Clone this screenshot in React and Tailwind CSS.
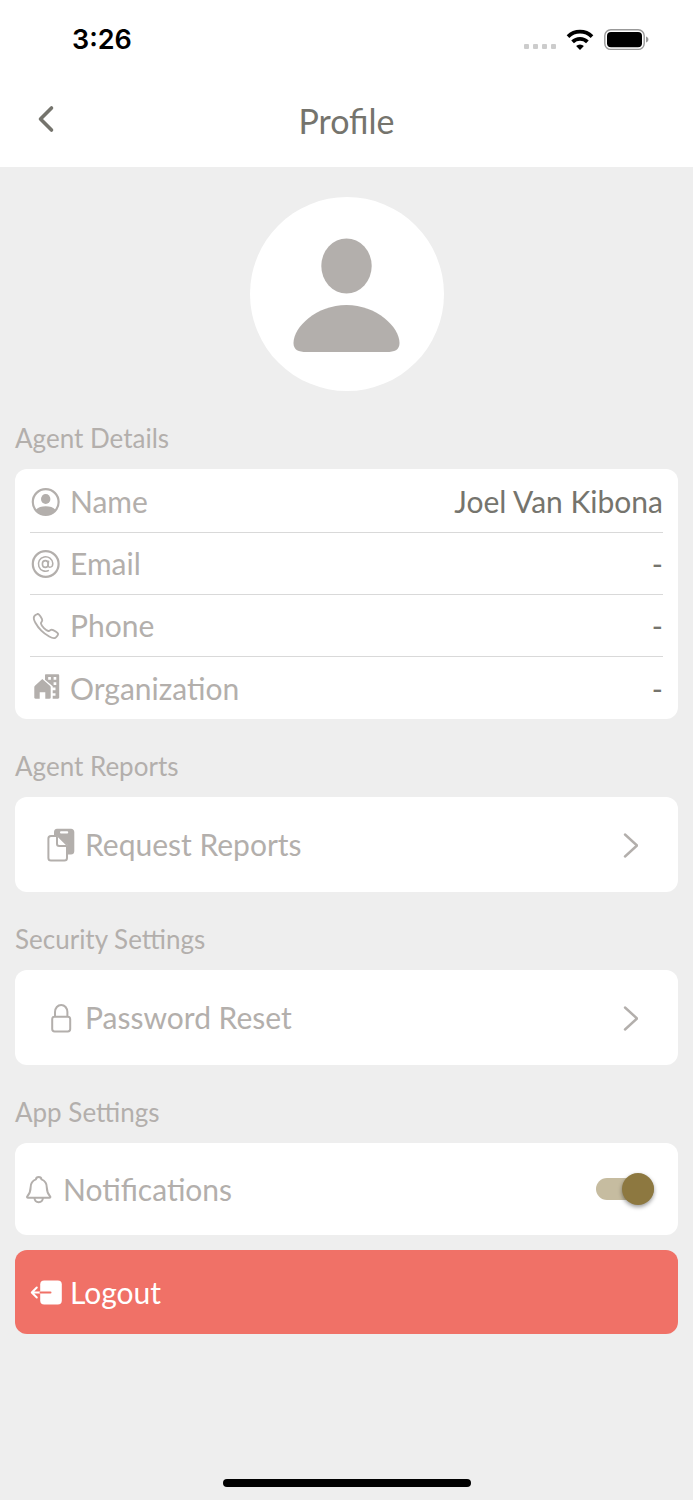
import React, { useState } from "react";
import { IoCallOutline } from "react-icons/io5";

const WifiIcon = () => (
	<svg width="28" height="22" viewBox="0 0 28 22" aria-hidden="true">
		<g fill="none" stroke="#000" strokeWidth="3.8">
			<path d="M2 7.600a17.200 17.200 0 0 1 24 0" />
			<path d="M6.600 12.800a10.600 10.600 0 0 1 14.800 0" />
		</g>
		<path d="M14 21l-3.900-4a5.600 5.600 0 0 1 7.800 0z" fill="#000" />
	</svg>
);

const BatteryIcon = () => (
	<svg width="45" height="22" viewBox="0 0 45 22" aria-hidden="true">
		<rect x="0.8" y="0.8" width="39.4" height="19.6" rx="6" fill="none" stroke="#999" strokeWidth="1.4" />
		<rect x="3" y="3" width="35" height="15.2" rx="4" fill="#000" />
		<path d="M42 7.600c1.600.600 2.400 1.700 2.400 3s-.800 2.400-2.400 3z" fill="#999" />
	</svg>
);

const BackIcon = () => (
	<svg width="32" height="32" viewBox="0 0 32 32" fill="none" aria-hidden="true">
		<path d="M21.500 5 10.500 16 21.500 27" stroke="#75746d" strokeWidth="3.600" strokeLinecap="round" strokeLinejoin="round" />
	</svg>
);

const ChevronIcon = () => (
	<svg width="16" height="26" viewBox="0 0 16 26" fill="none" aria-hidden="true">
		<path d="M3 2.500l12 11-12 11" stroke="#b3afac" strokeWidth="2.400" strokeLinecap="round" strokeLinejoin="round" />
	</svg>
);

const AvatarIcon = () => (
	<svg width="108" height="116" viewBox="0 0 108 116" fill="#b3afac" aria-hidden="true">
		<ellipse cx="53.500" cy="30" rx="25.200" ry="27.500" />
		<path d="M53.500 69c30 0 53 22 53 38 0 7-5 9-13 9h-80c-8 0-13-2-13-9 0-16 23-38 53-38z" />
	</svg>
);

const UserIcon = () => (
	<svg width="32" height="32" viewBox="0 0 32 32" aria-hidden="true">
		<circle cx="15.700" cy="16" r="12.900" fill="none" stroke="currentColor" strokeWidth="2.200" />
		<ellipse cx="15.700" cy="13" rx="4.700" ry="5.100" fill="currentColor" />
		<path d="M5.700 24c2.300-2.700 6-3.700 10-3.700s7.700 1 10 3.700a12.900 12.900 0 0 1-20 0z" fill="currentColor" />
	</svg>
);

const AtIcon = () => (
	<svg width="32" height="32" viewBox="0 0 32 32" fill="none" stroke="currentColor" aria-hidden="true">
		<circle cx="15.700" cy="16" r="12.900" strokeWidth="2.200" />
		<ellipse cx="15.300" cy="16" rx="2.900" ry="3.400" strokeWidth="1.600" />
		<path d="M18.600 12.600l-.5 5c-.1 2.600 4.700 2.200 4.700-2.200a7.200 7.200 0 1 0-3.900 7" strokeWidth="1.500" />
	</svg>
);

const PhoneIcon = () => <IoCallOutline className="size-8 p-px" aria-hidden="true" />;

const OrganizationIcon = () => (
	<svg width="32" height="32" viewBox="0 0 32 32" fill="currentColor" aria-hidden="true">
		<path d="M5.200 13.400l7.100-6.300 7.400 6.300c.6.500 1 1 1 1.900v10.200c0 .8-.5 1.200-1.200 1.200h-4.200v-6.400H9.700v6.400H5.500c-.8 0-1.200-.5-1.200-1.200V15.300c0-.8.300-1.400.900-1.900z" />
		<path
			fillRule="evenodd"
			d="M15.700 2.200H28c.7 0 1.200.5 1.200 1.200v22.200c0 .7-.5 1.200-1.200 1.200h-5.300v-3h2.800v-2.600h-2.800v-3h2.800v-2.600h-2.800v-1.300l-7.700-6.500V3.200c0-.6.200-1 .7-1zM18.200 5v2.700h2.700V5zM23.600 5v2.700h2.700V5zM23.600 10.300V13h2.700v-2.700z"
		/>
	</svg>
);

const ReportsIcon = () => (
	<svg width="32" height="36" viewBox="0 0 32 36" aria-hidden="true">
		<path d="M12 1.700h14c2 0 3.300 1.300 3.300 3.300v19.200c0 2-1.300 3.300-3.300 3.300h-3.500V18L12 8 9 8.500V5c0-2 1-3.300 3-3.300z" fill="currentColor" />
		<rect x="15" y="4.300" width="8.200" height="2.200" rx="1" fill="#fff" />
		<g fill="#fff" stroke="currentColor" strokeWidth="2" strokeLinejoin="round">
			<path d="M6 9h6.700l9.300 9.700V31c0 1.700-.9 2.600-2.600 2.600H6c-1.700 0-2.600-.9-2.600-2.600V11.600C3.400 9.900 4.300 9 6 9z" />
			<path d="M12 9.200v7.600c0 1.400.8 2.200 2.200 2.200h7.600" />
		</g>
	</svg>
);

const LockIcon = () => (
	<svg width="32" height="32" viewBox="0 0 32 32" fill="none" stroke="currentColor" strokeWidth="2" aria-hidden="true">
		<rect x="7.200" y="14.700" width="18" height="14.700" rx="2.400" />
		<path d="M10 14.700v-4.600a6.200 7.200 0 0 1 12.400 0v4.600" />
	</svg>
);

const BellIcon = () => (
	<svg width="32" height="32" viewBox="0 0 32 32" fill="none" stroke="currentColor" strokeWidth="2" strokeLinejoin="round" aria-hidden="true">
		<path d="M12.900 6.400c.4-3.200 5.200-3.200 5.600 0 3.700 1.400 5.300 4.400 5.300 8.100 0 4.800 1 6.200 3.300 8.800.6.800.2 1.500-.7 1.500H5c-.9 0-1.300-.7-.7-1.500 2.300-2.600 3.300-4 3.300-8.800 0-3.700 1.600-6.700 5.300-8.100z" />
		<path d="M11.500 25c.2 2.800 1.800 4.200 4.200 4.200s4-1.400 4.200-4.200" />
	</svg>
);

const LogoutIcon = () => (
	<svg width="32" height="32" viewBox="0 0 32 32" fill="none" strokeLinecap="round" strokeLinejoin="round" aria-hidden="true">
		<rect x="10.200" y="4.500" width="21.600" height="24" rx="4" fill="#fff" />
		<path d="M10 16.500H2.300M6.800 11.500l-5 5 5 5" stroke="#fff" strokeWidth="2" />
		<path d="M10.500 16.500h10" stroke="#f07167" strokeWidth="2" />
	</svg>
);

const details = [
	{ label: "Name", value: "Joel Van Kibona", Icon: UserIcon },
	{ label: "Email", value: "-", Icon: AtIcon },
	{ label: "Phone", value: "-", Icon: PhoneIcon },
	{ label: "Organization", value: "-", Icon: OrganizationIcon },
];

const SectionTitle = ({ children }) => (
	<h2 className="flex h-[78px] items-end pb-[13px] text-[26px] leading-9 text-[#b3afac]">{children}</h2>
);

const LinkRow = ({ label, Icon }) => (
	<button
		type="button"
		className="flex h-[95px] w-full cursor-pointer items-center gap-2 rounded-xl bg-white pr-10 pl-[30px] text-[30px] text-[#b3afac]"
	>
		<Icon />
		<span className="flex-1 text-left">{label}</span>
		<ChevronIcon />
	</button>
);

const Profile = () => {
	const [notifications, setNotifications] = useState(true);

	return (
		<div className="flex min-h-screen flex-col bg-[#eee] font-['Lato',sans-serif]">
			<header className="bg-white">
				{/* Status bar */}
				<div className="flex h-19 items-center justify-between pt-1 pr-11 pl-18">
					<span className="font-['Inter',sans-serif] text-[27px] font-semibold text-black">3:26</span>
					<div className="flex items-center gap-2.5">
						<div className="flex gap-1 pt-3">
							<span className="size-[5px] rounded-[1px] bg-[#ccc]"></span>
							<span className="size-[5px] rounded-[1px] bg-[#ccc]"></span>
							<span className="size-[5px] rounded-[1px] bg-[#ccc]"></span>
							<span className="size-[5px] rounded-[1px] bg-[#ccc]"></span>
						</div>
						<WifiIcon />
						<BatteryIcon />
					</div>
				</div>

				{/* Title bar */}
				<div className="grid h-[91px] grid-cols-[1fr_auto_1fr] items-center px-[30px] pb-0.5">
					<button type="button" aria-label="Back" className="w-8 cursor-pointer pb-1">
						<BackIcon />
					</button>
					<h1 className="text-[34px] text-[#75746d]">Profile</h1>
				</div>
			</header>

			<main className="px-[15px] pt-[30px]">
				<div className="mx-auto grid size-[194px] place-items-center rounded-full bg-white">
					<AvatarIcon />
				</div>

				<SectionTitle>Agent Details</SectionTitle>
				<dl className="rounded-xl bg-white px-[15px] pt-0.5 text-[30px]">
					{details.map(({ label, value, Icon }) => (
						<div
							key={label}
							className="flex h-[62px] items-center justify-between border-b border-[#d9d9d9] last:border-b-0"
						>
							<dt className="flex items-center gap-2 text-[#b3afac]">
								<Icon />
								{label}
							</dt>
							<dd className="text-[#75746d]">{value}</dd>
						</div>
					))}
				</dl>

				<SectionTitle>Agent Reports</SectionTitle>
				<LinkRow label="Request Reports" Icon={ReportsIcon} />

				<SectionTitle>Security Settings</SectionTitle>
				<LinkRow label="Password Reset" Icon={LockIcon} />

				<SectionTitle>App Settings</SectionTitle>
				<label className="flex h-[92px] cursor-pointer items-center gap-2 rounded-xl bg-white pr-6 pl-2 text-[30px] text-[#b3afac]">
					<BellIcon />
					<span className="flex-1">Notifications</span>
					<input
						type="checkbox"
						role="switch"
						checked={notifications}
						onChange={(e) => setNotifications(e.target.checked)}
						className="peer sr-only"
					/>
					<span className="flex h-[22px] w-[58px] items-center rounded-full bg-gray-300 peer-checked:justify-end peer-checked:bg-[#c6bca0] peer-checked:[&>span]:bg-[#8d7840]">
						<span className="size-8 shrink-0 rounded-full bg-gray-100 shadow-[0_2px_4px_rgba(0,0,0,0.4)]"></span>
					</span>
				</label>

				<button
					type="button"
					className="mt-[15px] flex h-[84px] w-full cursor-pointer items-center gap-2 rounded-xl bg-[#f07167] px-[15px] text-[30px] text-white"
				>
					<LogoutIcon />
					Logout
				</button>
			</main>

			{/* Home indicator */}
			<div className="mx-auto mt-auto mb-[13px] h-2 w-[248px] rounded-full bg-black"></div>
		</div>
	);
};

export default Profile;
